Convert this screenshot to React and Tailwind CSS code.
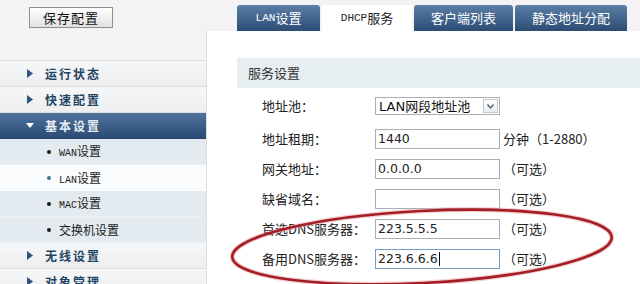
import React from 'react';

const cjk = { fontFamily: '"Noto Sans CJK SC", "Noto Sans", sans-serif' };
const mono = { fontFamily: '"Liberation Mono", "Noto Sans CJK SC", monospace' };
const num = { fontFamily: '"DejaVu Sans", "Noto Sans CJK SC", sans-serif' };

const Arrow = ({ down }) =>
  down ? (
    <svg width="8" height="6" viewBox="0 0 8 6" className="shrink-0">
      <path d="M0 0 L8 0 L4 5 Z" fill="#ffffff" />
    </svg>
  ) : (
    <svg width="6" height="9" viewBox="0 0 6 9" className="shrink-0">
      <path d="M0 0 L6 4.5 L0 9 Z" fill="#2d557d" />
    </svg>
  );

const MenuItem = ({ label, active }) => (
  <div
    className={
      active
        ? 'h-[26px] flex items-center pl-[26px] gap-[11px] bg-linear-to-b from-[#4f739b] to-[#2b4c74] border-b border-[#24456c]'
        : 'h-[26px] flex items-center pl-[27px] gap-[12px] bg-linear-to-b from-[#f6f7f8] to-[#eceef0] border-b border-[#dcdfe2]'
    }
  >
    <Arrow down={active} />
    <span
      className={
        active
          ? 'text-[12px] font-bold tracking-[2px] text-[#e6edf4]'
          : 'text-[12px] font-bold tracking-[2px] text-[#1f4563]'
      }
      style={cjk}
    >
      {label}
    </span>
  </div>
);

const SubItem = ({ latin, cn, active }) => (
  <div
    className={
      active
        ? 'h-[26px] flex items-center pl-[47px] gap-[8px] bg-[#fbfcfd]'
        : 'h-[26px] flex items-center pl-[47px] gap-[8px] bg-[#e3eaf0] border-b border-[#edf1f4]'
    }
  >
    <span className={active ? 'w-[4px] h-[4px] rounded-full bg-[#3f7283]' : 'w-[4px] h-[4px] rounded-full bg-[#1c1c1c]'} />
    <span className="text-[12px] text-[#1a1a1a]" style={cjk}>
      {latin && <span className="text-[10px]" style={mono}>{latin}</span>}
      {cn}
    </span>
  </div>
);

const Tab = ({ children, active, w, font }) => (
  <div
    className={
      active
        ? 'h-[26px] flex items-center justify-center bg-white text-[#222] text-[12px]'
        : 'h-[26px] flex items-center justify-center rounded-t-[3px] bg-linear-to-b from-[#5b7fa7] to-[#2c4c74] text-white text-[13px]'
    }
    style={{ width: w, ...font }}
  >
    {children}
  </div>
);

const Field = ({ label, value, note, focused }) => (
  <div className="h-[30px] flex items-center">
    <span className="w-[113px] text-[13px] text-[#222]" style={cjk}>{label}</span>
    <div
      className={
        focused
          ? 'w-[125px] h-[20px] border border-[#6f9cc9] bg-white flex items-center pl-[2px]'
          : 'w-[125px] h-[20px] border border-[#a9afb6] bg-white flex items-center pl-[2px]'
      }
    >
      <span className="text-[12.5px] text-[#222] leading-none" style={num}>{value}</span>
      {focused && <span className="w-px h-[14px] bg-[#111] ml-px" />}
    </div>
    {note && <span className="ml-[3px] text-[13px] text-[#222]" style={cjk}>{note}</span>}
  </div>
);

export default function App() {
  return (
    <div className="relative w-[640px] h-[284px] overflow-hidden bg-white flex flex-col" style={cjk}>
      {/* top bar */}
      <div className="h-[31px] shrink-0 bg-[#f3f3f3] flex">
        <div className="w-[207px] shrink-0 pl-[29px] pt-[4px]">
          <button className="w-[84px] h-[21px] border border-[#8f8f8f] bg-linear-to-b from-white to-[#e2e2e2] text-[13px] text-[#111] tracking-[1px]" style={cjk}>
            保存配置
          </button>
        </div>
        <div className="flex items-end pl-[30px] gap-[2px]">
          <Tab w={83} font={mono}>
            <span className="text-[11px]">LAN</span><span className="text-[13px]" style={cjk}>设置</span>
          </Tab>
          <Tab active w={90} font={mono}>
            <span className="text-[11px]">DHCP</span><span className="text-[13px]" style={cjk}>服务</span>
          </Tab>
          <Tab w={99} font={cjk}>客户端列表</Tab>
          <Tab w={112} font={cjk}>静态地址分配</Tab>
        </div>
      </div>

      <div className="flex flex-1">
        {/* sidebar */}
        <div className="w-[207px] shrink-0 bg-[#f3f3f3] border-r border-[#dedede] pt-[29px]">
          <div className="border-t border-[#dcdfe2]">
            <MenuItem label="运行状态" />
            <MenuItem label="快速配置" />
            <MenuItem label="基本设置" active />
            <SubItem latin="WAN" cn="设置" />
            <SubItem latin="LAN" cn="设置" active />
            <SubItem latin="MAC" cn="设置" />
            <SubItem cn="交换机设置" />
            <MenuItem label="无线设置" />
            <MenuItem label="对象管理" />
          </div>
        </div>

        {/* content */}
        <div className="flex-1 pl-[30px] pt-[27px]">
          <div className="h-[30px] bg-[#e7eef1] flex items-center pl-[11px] text-[13px] text-[#333]" style={cjk}>
            服务设置
          </div>
          <div className="pl-[25px] pt-[3px]">
            <div className="h-[30px] flex items-center">
              <span className="w-[113px] text-[13px] text-[#222]" style={cjk}>地址池：</span>
              <div className="w-[125px] h-[18px] border border-[#a9afb6] bg-white flex items-center">
                <span className="flex-1 pl-[3px] text-[13px] text-[#111] leading-none" style={num}>
                  LAN<span style={cjk}>网段地址池</span>
                </span>
                <span className="w-[15px] h-[14px] mr-px border border-[#c4c9cf] bg-linear-to-b from-white to-[#e8ecf0] flex items-center justify-center">
                  <svg width="7" height="5" viewBox="0 0 7 5">
                    <path d="M0.5 0.5 L3.5 4 L6.5 0.5" fill="none" stroke="#4d5e72" strokeWidth="1.3" />
                  </svg>
                </span>
              </div>
            </div>
            <div className="mt-[3px]">
              <Field label="地址租期：" value="1440" note="分钟（1-2880）" />
              <Field label="网关地址：" value="0.0.0.0" note="（可选）" />
              <Field label="缺省域名：" value="" note="（可选）" />
              <Field label="首选DNS服务器：" value="223.5.5.5" note="（可选）" />
              <Field label="备用DNS服务器：" value="223.6.6.6" note="（可选）" focused />
            </div>
          </div>
        </div>
      </div>

      {/* red hand-drawn ellipse */}
      <svg className="absolute left-0 top-0 pointer-events-none" width="640" height="284" viewBox="0 0 640 284">
        <ellipse cx="422" cy="247" rx="190" ry="36" transform="rotate(-3 422 247)" fill="none" stroke="#e8a0a4" strokeWidth="5" opacity="0.5" />
        <ellipse cx="422" cy="247" rx="190" ry="36" transform="rotate(-3 422 247)" fill="none" stroke="#a51d27" strokeWidth="2.6" />
      </svg>
    </div>
  );
}
